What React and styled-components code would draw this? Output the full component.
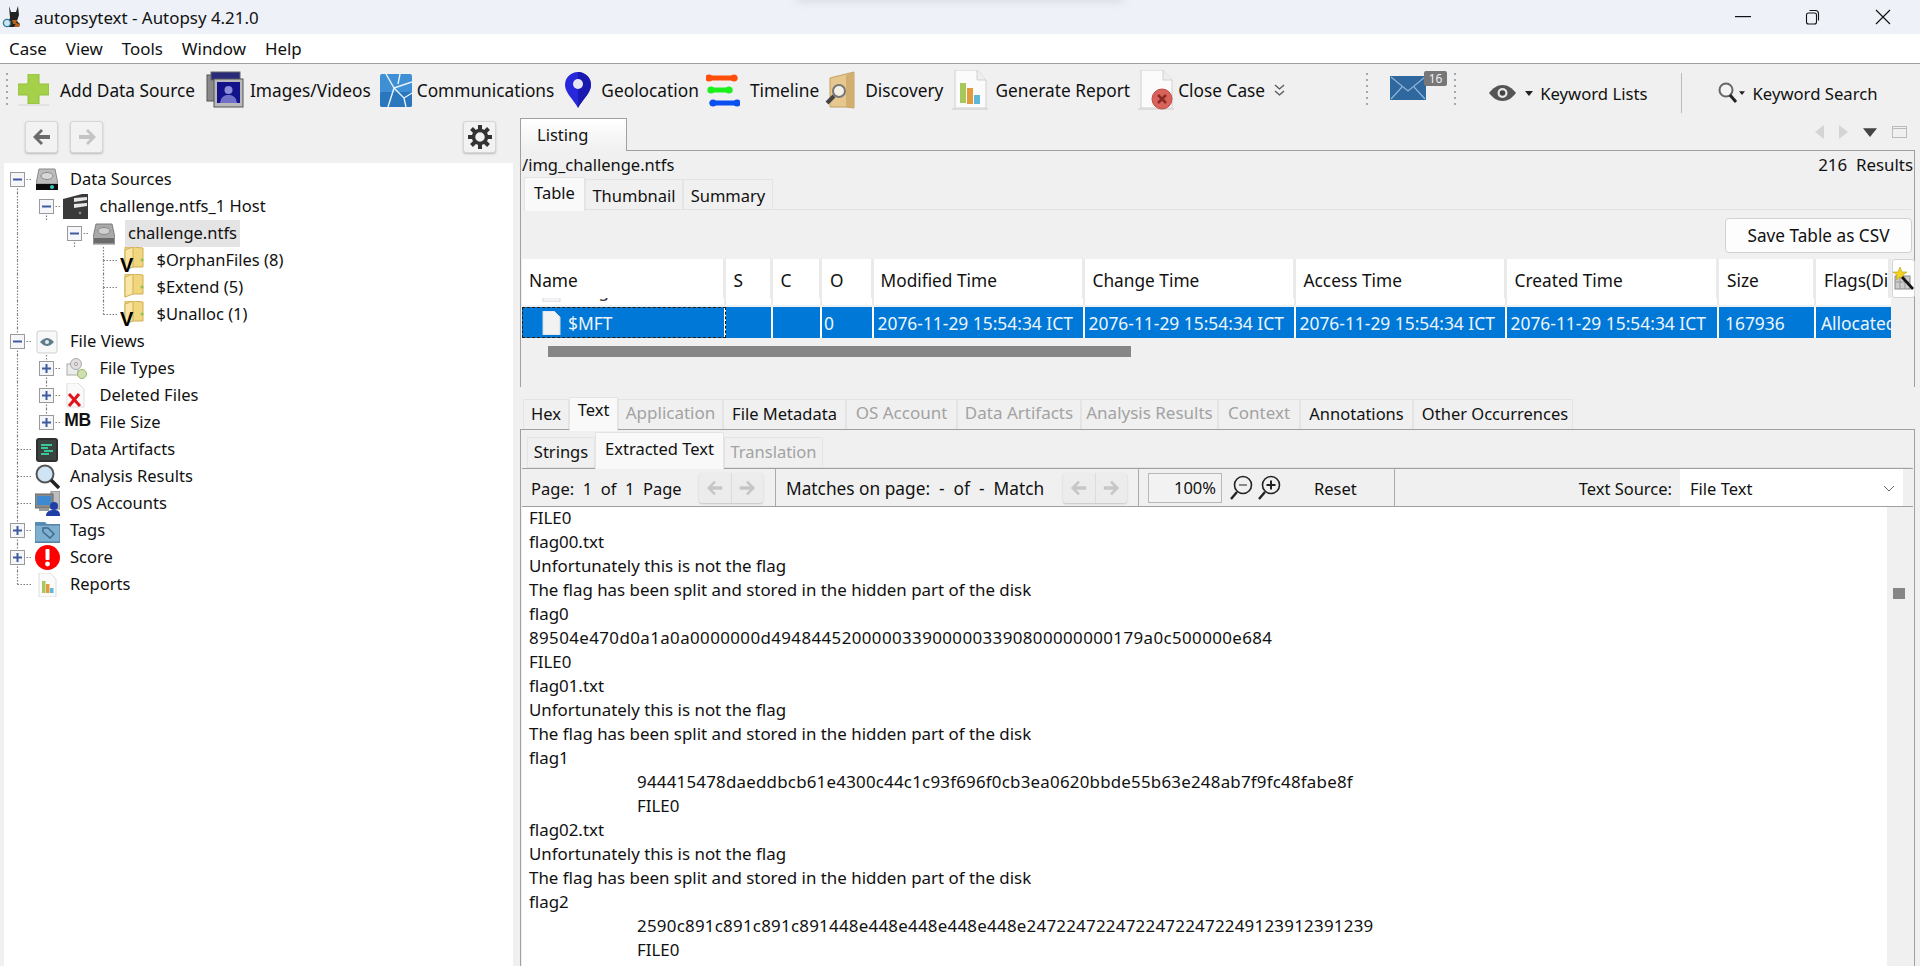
import React from 'react';
import styled, { createGlobalStyle } from 'styled-components';

const FONT = `"Noto Sans", "Open Sans", sans-serif`;
const PANEL = '#f0f0f0';
const LINE = '#a0a0a0';

const Global = createGlobalStyle`
  html, body { margin: 0; padding: 0; height: 100%; background: ${PANEL}; overflow: hidden; }
  body { font-family: ${FONT}; font-size: 16.5px; color: #111; }
  * { box-sizing: border-box; }
  svg { display: block; flex: none; }
`;

const Page = styled.div`
  width: 1920px;
  height: 966px;
  display: flex;
  flex-direction: column;
  overflow: hidden;
`;

/* title + menu */
const TitleBar = styled.div`
  position: relative;
  height: 34px;
  flex: none;
  background: #eef2f8;
  display: flex;
  align-items: center;
  padding: 0 2px 0 2px;
`;
const TitleShadow = styled.div`
  position: absolute;
  left: 795px;
  top: -8px;
  width: 330px;
  height: 10px;
  border-radius: 8px;
  background: #d8dce2;
  filter: blur(4px);
`;
const TitleText = styled.span`
  margin-left: 8px;
  font-size: 16.9px;
  flex: 1;
`;
const WinButton = styled.div`
  width: 70px;
  height: 34px;
  display: flex;
  align-items: center;
  justify-content: center;
`;
const MenuBar = styled.div`
  height: 30px;
  flex: none;
  background: #fff;
  border-bottom: 1px solid ${LINE};
  display: flex;
  align-items: center;
  padding-left: 9px;
  gap: 19px;
  font-size: 16.9px;
`;
const MenuItem = styled.span``;

/* main toolbar */
const ToolBar = styled.div`
  height: 54px;
  flex: none;
  display: flex;
  align-items: flex-start;
  padding: 9px 0 0 6px;
`;
const Grip = styled.div`
  width: 2px;
  height: 33px;
  margin-left: ${p => p.$ml || 0}px;
  flex: none;
  background-image: repeating-linear-gradient(to bottom, #a8a8a8 0 2px, transparent 2px 6px);
`;
const Tool = styled.div`
  height: 34px;
  display: flex;
  align-items: center;
  flex: none;
  margin-left: ${p => p.$ml}px;
  font-size: 17.3px;
  white-space: nowrap;
`;
const ToolLabel = styled.span`
  margin-left: ${p => p.$ml}px;
`;
const SideTool = styled(Tool)`
  height: 40px;
  font-size: 16.7px;
`;
const CaretGap = styled.span`
  margin-left: ${p => p.$ml}px;
  flex: none;
`;
const MailWrap = styled.div`
  position: relative;
  margin: 3px 0 0 ${p => p.$ml}px;
  width: 36px;
  height: 24px;
  flex: none;
`;
const Badge = styled.span`
  position: absolute;
  left: 34px;
  top: -5px;
  width: 23px;
  height: 15px;
  background: #777;
  color: #eee;
  font-size: 12px;
  line-height: 15px;
  text-align: center;
  border-radius: 2px;
`;
const VSep = styled.div`
  width: 1px;
  height: 40px;
  margin-left: ${p => p.$ml}px;
  background: #bbb;
  flex: none;
`;

/* layout */
const Main = styled.div`
  flex: 1;
  display: flex;
  min-height: 0;
`;
const LeftPane = styled.div`
  width: 520px;
  flex: none;
  display: flex;
  flex-direction: column;
  padding: 0 7px 0 4px;
`;
const NavRow = styled.div`
  height: 45px;
  flex: none;
  display: flex;
  align-items: flex-start;
  padding: 3px 0 0 21px;
`;
const NavBtn = styled.div`
  width: 33px;
  height: 32px;
  margin-left: ${p => p.$ml || 0}px;
  border-radius: 3px;
  border: 1px solid #d6d6d6;
  background: #f2f2f2;
  box-shadow: 0 1px 2px #bbb;
  display: flex;
  align-items: center;
  justify-content: center;
  flex: none;
`;
const Tree = styled.div`
  flex: 1;
  background: #fff;
  padding-top: 3px;
`;
const TreeRow = styled.div`
  height: 27px;
  display: flex;
  align-items: center;
  margin-left: -1px;
`;
const IconSlot = styled.div`
  width: 24px;
  height: 26px;
  margin-left: 3.5px;
  flex: none;
  display: flex;
  align-items: center;
  justify-content: center;
`;
const MbMark = styled.span`
  font-family: "Liberation Sans", sans-serif;
  font-weight: 700;
  font-size: 17.5px;
  letter-spacing: -0.3px;
  margin-top: -5px;
  margin-left: 4px;
  color: #111;
`;
const TreeLabel = styled.span`
  margin-left: ${p => (p.$top ? 8 : 9)}px;
  padding: 0 3px;
  height: 27px;
  line-height: 26px;
  white-space: nowrap;
  background: ${p => (p.$sel ? '#e4e4e4' : 'transparent')};
`;

const RightPane = styled.div`
  flex: 1;
  min-width: 0;
  display: flex;
  flex-direction: column;
  padding-right: 5px;
`;
const TopTabRow = styled.div`
  height: 32px;
  flex: none;
  display: flex;
  align-items: stretch;
  justify-content: space-between;
`;
const ListingTab = styled.div`
  width: 107px;
  border: 1px solid ${LINE};
  border-bottom: 0;
  background: linear-gradient(#fff, #f0f0f0);
  padding: 4px 0 0 16px;
  font-size: 16.5px;
  margin-bottom: -1px;
  position: relative;
`;
const PaneActions = styled.div`
  display: flex;
  align-items: center;
  padding: 0 8px 4px 0;
  gap: 15px;
`;
const UpperPanel = styled.div`
  height: 237px;
  flex: none;
  border: 1px solid ${LINE};
  border-bottom: 0;
  padding: 0 1px;
  display: flex;
  flex-direction: column;
`;
const PathRow = styled.div`
  height: 27px;
  flex: none;
  display: flex;
  justify-content: space-between;
  align-items: center;
  white-space: pre;
`;
const ResultCount = styled.span`
  font-size: 16.9px;
`;
const TabRow = styled.div`
  display: flex;
  align-items: flex-end;
  flex: none;
  height: ${p => p.$h}px;
  margin-left: ${p => p.$ml}px;
  margin-right: ${p => p.$mr || 0}px;
  border-bottom: 1px solid #e2e2e2;
`;
// $dy nudges the label up or down inside the fixed tab height
const Tab = styled.div`
  width: ${p => p.$w}px;
  height: ${p => (p.$active ? p.$h + 4 : p.$h)}px;
  margin-bottom: ${p => (p.$active ? -2 : 0)}px;
  flex: none;
  display: flex;
  align-items: ${p => (p.$active ? 'flex-start' : 'center')};
  justify-content: center;
  background: ${p => (p.$active ? '#f9f9f9' : PANEL)};
  color: ${p => (p.$off ? '#a2a2a2' : '#111')};
  border: 1px solid #e4e4e4;
  border-bottom: 0;
  white-space: nowrap;
  font-size: ${p => p.$fs || 16.5}px;
  line-height: ${p => (p.$active ? 28 + 2 * (p.$dy || 0) : 28)}px;
  ${p => (!p.$active && p.$dy > 0 ? `padding-top: ${p.$dy * 2}px;` : '')}
  ${p => (!p.$active && p.$dy < 0 ? `padding-bottom: ${-p.$dy * 2}px;` : '')}
  ${p => (p.$pl ? `padding-left: ${p.$pl}px;` : '')}
  position: relative;
`;
const SaveRow = styled.div`
  height: 49px;
  flex: none;
  display: flex;
  justify-content: flex-end;
  align-items: flex-start;
  padding: 8px 1px 0 0;
`;
const SaveBtn = styled.div`
  width: 187px;
  height: 35px;
  background: #fdfdfd;
  border: 1px solid #d0d0d0;
  border-radius: 4px;
  display: flex;
  align-items: center;
  justify-content: center;
  font-size: 17.2px;
`;
const HeadRow = styled.div`
  display: flex;
  flex: none;
  height: 39px;
  align-items: stretch;
`;
const HeadCell = styled.div`
  width: ${p => p.$w}px;
  flex: none;
  background: #fff;
  border-right: 3px solid #eaeaea;
  padding: 4px 0 0 ${p => p.$pl}px;
  display: flex;
  align-items: center;
  overflow: hidden;
  white-space: nowrap;
  font-size: 17.3px;
  &:last-of-type { border-right: 0; }
`;
const CornerBtn = styled.div`
  width: 23px;
  height: 39px;
  margin-left: 1px;
  background: #fff;
  border: 1px solid #d4d4d4;
  border-radius: 3px;
  display: flex;
  align-items: center;
  justify-content: center;
`;
const GhostRow = styled.div`
  display: flex;
  flex: none;
  height: 7px;
  overflow: hidden;
`;
const GhostCell = styled.div`
  width: ${p => p.$w}px;
  flex: none;
  background: #fff;
  border-right: 2px solid #eaeaea;
  overflow: hidden;
  position: relative;
  &:last-of-type { border-right: 0; }
`;
const GhostText = styled.div`
  margin: -23px 0 0 20px;
  display: flex;
  align-items: center;
  height: 30px;
  color: #333;
  font-size: 17.3px;
`;
const ResultRow = styled.div`
  display: flex;
  flex: none;
  height: 31px;
  margin-top: 2px;
`;
const ResultCell = styled.div`
  width: ${p => p.$w}px;
  flex: none;
  background: #0078d7;
  color: #eef5fc;
  border-right: 2px solid #fff;
  padding-left: ${p => p.$pl}px;
  display: flex;
  align-items: center;
  overflow: hidden;
  white-space: nowrap;
  font-size: 17.4px;
  ${p => (p.$focus ? 'outline: 1px dashed #2a1a08; outline-offset: -1px;' : '')}
  &:last-of-type { border-right: 0; }
`;
const FileName = styled.span`
  margin-left: ${p => p.$ml}px;
`;
const HBarTrack = styled.div`
  flex: none;
  height: 11px;
  margin: 8px 0 0 26px;
`;
const HBarThumb = styled.div`
  width: 583px;
  height: 11px;
  background: #868686;
`;

const LowerTabs = styled(TabRow)`
  margin-top: 5px;
  border-bottom: 0;
`;
const LowerPanel = styled.div`
  flex: 1;
  min-height: 0;
  border: 1px solid ${LINE};
  border-bottom: 0;
  padding: 0 1px;
  display: flex;
  flex-direction: column;
  overflow: hidden;
`;
const ViewerBar = styled.div`
  height: 39px;
  flex: none;
  display: flex;
  align-items: stretch;
  border-top: 1px solid ${LINE};
  border-bottom: 1px solid ${LINE};
`;
const BarText = styled.span`
  width: ${p => p.$w}px;
  margin-left: ${p => p.$ml || 0}px;
  padding-top: 1px;
  flex: none;
  align-self: center;
  white-space: pre;
  font-size: ${p => p.$fs || 16.5}px;
  text-align: ${p => p.$align || 'left'};
`;
const BarSep = styled.div`
  width: 1px;
  margin-left: ${p => p.$ml}px;
  background: #aaa;
  flex: none;
`;
const ArrowPair = styled.div`
  width: 64px;
  height: 30px;
  margin-left: ${p => p.$ml}px;
  align-self: center;
  flex: none;
  display: flex;
  border-radius: 3px;
  background: #ececec;
  box-shadow: 0 1px 2px #c4c4c4;
`;
const ArrowHalf = styled.div`
  flex: 1;
  display: flex;
  align-items: center;
  justify-content: center;
  border-right: ${p => (p.$first ? '1px solid #dcdcdc' : '0')};
`;
const ZoomField = styled.div`
  width: 74px;
  height: 30px;
  margin-left: ${p => p.$ml}px;
  align-self: center;
  flex: none;
  border: 1px solid #b8b8b8;
  background: #f2f2f2;
  display: flex;
  align-items: center;
  justify-content: flex-end;
  padding-right: 5px;
`;
const ZoomIcon = styled.div`
  margin-left: ${p => p.$ml}px;
  align-self: center;
  flex: none;
`;
const Combo = styled.div`
  width: 223px;
  margin-left: 8px;
  flex: none;
  background: #fff;
  display: flex;
  align-items: center;
  justify-content: space-between;
  padding: 1px 8px 0 10px;
`;
const TextArea = styled.div`
  flex: 1;
  min-height: 0;
  display: flex;
`;
const TextBody = styled.div`
  flex: 1;
  background: #fff;
  padding: 0 0 0 7px;
  overflow: hidden;
`;
const TextLine = styled.div`
  height: 24px;
  line-height: 21px;
  font-size: 16.9px;
  white-space: nowrap;
  padding-left: ${p => (p.$indent ? 108 : 0)}px;
  letter-spacing: ${p => p.$ls || 0}px;
`;
const ScrollStrip = styled.div`
  width: 26px;
  flex: none;
  padding: 81px 0 0 6px;
`;
const ScrollThumb = styled.div`
  width: 12px;
  height: 11px;
  background: #868686;
`;

/* ---- icons ---- */
const Logo = () => (
  <svg width="24" height="24" viewBox="0 0 24 24">
    <path d="M7 1l2 6h5l2-6 1 9-2 6 3 3-1 3H7l-1-5 2-4z" fill="#222" />
    <path d="M10 15h5l-1 4h-3z" fill="#b5641f" />
    <path d="M14 18l4 1-1 3h-5z" fill="#b5641f" />
    <circle cx="5" cy="18" r="3.6" fill="#cfe6ef" stroke="#2b7a99" strokeWidth="1.4" />
  </svg>
);
const Restore = () => (
  <svg width="16" height="16" viewBox="0 0 16 16" fill="none" stroke="#111" strokeWidth="1.1">
    <rect x="1.5" y="4" width="10" height="11" rx="2" />
    <path d="M4.5 1.5h6a3 3 0 0 1 3 3v7" />
  </svg>
);
const Plus = () => (
  <svg width="31" height="32" viewBox="0 0 31 32">
    <path d="M10 0h11v10h10v11H21v9H10v-9H0V10h10z" fill="#a4d04a" stroke="#93bf3f" />
    <rect x="0" y="30" width="31" height="2" fill="#e2e2e2" />
  </svg>
);
const Images = () => (
  <svg width="38" height="38" viewBox="0 0 38 38">
    <rect x="1" y="4" width="27" height="26" fill="#8a8a8a" stroke="#555" />
    <rect x="5" y="1" width="29" height="8" fill="#2a2a7a" stroke="#666" />
    <rect x="8" y="8" width="29" height="28" fill="#b9b9b9" stroke="#555" />
    <rect x="11" y="11" width="23" height="21" fill="#12128a" />
    <circle cx="22.5" cy="19" r="4" fill="#8c8cd8" />
    <path d="M14 32c1-7 5-8 8.500-8s7.500 1 8.500 8z" fill="#7070c8" />
  </svg>
);
const Comm = () => (
  <svg width="32" height="33" viewBox="0 0 32 33">
    <rect width="32" height="33" rx="2" fill="#3f8fd4" />
    <rect y="18" width="32" height="15" rx="2" fill="#2a76bd" />
    <path d="M6 0l8 14-6 19M14 14l18-6M14 14l10 10 2 9M24 24l8-5M20 0l-2 10" fill="none" stroke="#e8f3fb" strokeWidth="1.4" />
  </svg>
);
const Pin = () => (
  <svg width="26" height="36" viewBox="0 0 26 36">
    <path d="M13 0a13 13 0 0 1 13 13c0 8-9 15-13 23C9 28 0 21 0 13A13 13 0 0 1 13 0z" fill="#2727dc" />
    <path d="M13 0a13 13 0 0 1 13 13c0 8-9 15-13 23z" fill="#1a1ab0" />
    <circle cx="13" cy="12" r="5" fill="#e8e8f5" />
  </svg>
);
const Timeline = () => (
  <svg width="34" height="36" viewBox="0 0 34 36">
    <g strokeLinecap="round" strokeWidth="5">
      <path d="M2 6h27" stroke="#ff4f0a" />
      <path d="M4 18h20" stroke="#1cf01c" />
      <path d="M6 31h26" stroke="#0a50f0" />
    </g>
    <circle cx="3" cy="6" r="3.500" fill="#ff4f0a" />
    <circle cx="28" cy="6" r="3.500" fill="#ff4f0a" />
    <circle cx="5" cy="18" r="3.500" fill="#1cf01c" />
    <circle cx="23" cy="18" r="3.500" fill="#1cf01c" />
    <circle cx="7" cy="31" r="3.500" fill="#0a50f0" />
    <circle cx="31" cy="31" r="3.500" fill="#0a50f0" />
  </svg>
);
const Discovery = () => (
  <svg width="33" height="38" viewBox="0 0 33 38">
    <path d="M7 7l24-6v36l-8-1H7z" fill="#e6c88f" stroke="#c29f61" />
    <path d="M23 4l8-3v36l-8-1z" fill="#d2ae70" />
    <circle cx="16" cy="20" r="6" fill="#f3f0e8" stroke="#777" strokeWidth="2" />
    <path d="M11 25l-7 7" stroke="#444" strokeWidth="4" />
  </svg>
);
const DocBase = () => (
  <>
    <path d="M3 0h22l9 10v28H3z" fill="#fbfbfb" stroke="#d0d0d0" />
    <path d="M25 0v10h9" fill="#eee" stroke="#d0d0d0" />
    <rect x="0" y="38" width="36" height="2" fill="#dcdcdc" />
  </>
);
const Report = () => (
  <svg width="36" height="40" viewBox="0 0 36 40">
    <DocBase />
    <rect x="8" y="13" width="6" height="20" fill="#a6c85a" />
    <rect x="15" y="18" width="6" height="16" fill="#e39a3c" />
    <rect x="22" y="25" width="6" height="9" fill="#5fb6d8" />
  </svg>
);
const CloseDoc = () => (
  <svg width="36" height="40" viewBox="0 0 36 40">
    <DocBase />
    <circle cx="24" cy="29" r="10" fill="#d9625a" stroke="#c14a44" />
    <path d="M20 25l8 8M28 25l-8 8" stroke="#8a2a24" strokeWidth="2.500" />
  </svg>
);
const Chevrons = () => (
  <svg width="11" height="13" viewBox="0 0 11 13" fill="none" stroke="#555" strokeWidth="1.300">
    <path d="M1 1l4.500 4L10 1M1 7l4.500 4L10 7" />
  </svg>
);
const Mail = () => (
  <svg width="36" height="24" viewBox="0 0 36 24">
    <rect width="36" height="24" fill="#2f689f" />
    <path d="M1 1l17 14L35 1M1 23l11-12M35 23L24 11" fill="none" stroke="#8fb4d6" strokeWidth="1.200" />
  </svg>
);
const Eye = () => (
  <svg width="27" height="16" viewBox="0 0 27 16">
    <path d="M0 8c4-5 8-8 13.500-8S23 3 27 8c-4 5-8 8-13.500 8S4 13 0 8z" fill="#555" />
    <circle cx="13.500" cy="8" r="5" fill="#e8e8e8" />
    <circle cx="13.500" cy="8" r="2.800" fill="#444" />
  </svg>
);
const Caret = ({ c = '#222', w = 8, h = 5 }) => (
  <svg width={w} height={h} viewBox="0 0 8 5"><path d="M0 0h8L4 5z" fill={c} /></svg>
);
const SearchKw = () => (
  <svg width="20" height="24" viewBox="0 0 20 24" fill="none">
    <circle cx="8" cy="9" r="6.500" stroke="#666" strokeWidth="2" fill="#f4f4f4" />
    <path d="M12 14l6 7" stroke="#222" strokeWidth="3" />
  </svg>
);
const BackArrow = ({ dir = 1, c = '#6a6a6a', size = 20 }) => (
  <svg width={size} height={size} viewBox="0 0 20 20" style={dir < 0 ? { transform: 'scaleX(-1)' } : undefined}>
    <path d="M9 2l2 2-4 4h11v4H7l4 4-2 2-8-8z" fill={c} />
  </svg>
);
const Gear = () => (
  <svg width="24" height="24" viewBox="0 0 24 24">
    <circle cx="12" cy="12" r="6.500" fill="none" stroke="#333" strokeWidth="3.500" />
    <g stroke="#333" strokeWidth="4">
      <path d="M12 0v5M12 19v5M0 12h5M19 12h5M3.500 3.500l3.500 3.500M17 17l3.500 3.500M20.500 3.500L17 7M7 17l-3.500 3.500" />
    </g>
  </svg>
);
const Wand = () => (
  <svg width="21" height="24" viewBox="0 0 21 24">
    <rect x="2" y="9" width="15" height="13" fill="#ccc" stroke="#888" />
    <path d="M7 9v13M12 9v13M2 15h15" stroke="#999" />
    <path d="M7 0l2 5h5l-4 3 1 5-4-3-4 3 1-5-4-3h5z" fill="#f3d21f" stroke="#b99a10" strokeWidth=".6" />
    <path d="M9 10l11 12" stroke="#111" strokeWidth="2.600" />
  </svg>
);
const FileMini = ({ c = '#f2f2f2' }) => (
  <svg width="19" height="24" viewBox="0 0 19 24">
    <path d="M1 0h11l6 6v18H1z" fill={c} stroke="#d0dbe6" />
  </svg>
);
const ZoomGlass = ({ plus }) => (
  <svg width="24" height="26" viewBox="0 0 24 26" fill="none">
    <circle cx="14" cy="10" r="8.500" stroke="#222" strokeWidth="1.600" />
    <path d="M8 17l-6 7" stroke="#222" strokeWidth="2.400" />
    <path d={plus ? 'M9.500 10h9M14 5.500v9' : 'M10 10h8'} stroke={plus ? '#222' : '#888'} strokeWidth="2" />
  </svg>
);
const ChevronDown = () => (
  <svg width="12" height="7" viewBox="0 0 12 7" fill="none" stroke="#666"><path d="M1 1l5 5 5-5" /></svg>
);

/* tree icons */
const FOLDER_BODY = (
  <>
    <path d="M5 0h8l10 1v19H10l-5 3z" fill="#f2d67e" stroke="#cfae55" />
    <path d="M5 3l8-3v20l-8 3z" fill="#f9e6a4" stroke="#cfae55" />
    <circle cx="22" cy="13" r="1.500" fill="#8cc34a" />
  </>
);
const TI = {
  source: (
    <svg width="22" height="24" viewBox="0 0 22 24">
      <path d="M3 1h16l3 15H0z" fill="#bcbcbc" stroke="#888" />
      <ellipse cx="11" cy="8" rx="6" ry="3.500" fill="#d8d8d8" stroke="#8a8a8a" />
      <path d="M0 16h22v6H0z" fill="#0c0c0c" />
      <circle cx="16" cy="19" r="2" fill="#34c7c7" />
    </svg>
  ),
  host: (
    <svg width="25" height="25" viewBox="0 0 25 25">
      <path d="M0 5L19 0h6v25H0z" fill="#3a3a3a" />
      <path d="M11 4l13-1v3l-13 2zM11 10l13-1v3l-13 2z" fill="#e8e8e8" />
      <circle cx="17" cy="19" r="1.400" fill="#888" />
    </svg>
  ),
  hdd: (
    <svg width="22" height="22" viewBox="0 0 22 22">
      <path d="M3 1h16l3 14v6H0v-6z" fill="#a9a9a9" stroke="#7c7c7c" />
      <ellipse cx="11" cy="8" rx="6" ry="3.500" fill="#cfcfcf" stroke="#888" />
      <rect x="1" y="15" width="20" height="5" fill="#6a6a6a" />
    </svg>
  ),
  folder: (
    <svg width="26" height="28" viewBox="0 0 26 28">{FOLDER_BODY}</svg>
  ),
  vfolder: (
    <svg width="26" height="28" viewBox="0 0 26 28">
      {FOLDER_BODY}
      <text x="0" y="25" fontFamily="Liberation Sans" fontWeight="700" fontSize="20" fill="#000">V</text>
    </svg>
  ),
  eye: (
    <svg width="22" height="24" viewBox="0 0 22 24">
      <rect x="1" y="1" width="20" height="22" rx="2" fill="#f8f8f8" stroke="#cfcfcf" />
      <path d="M4 12c3-3 5-4 7-4s4 1 7 4c-3 3-5 4-7 4s-4-1-7-4z" fill="#5e7c8a" />
      <circle cx="11" cy="12" r="2" fill="#e6eef2" />
    </svg>
  ),
  types: (
    <svg width="23" height="23" viewBox="0 0 23 23">
      <rect x="3" y="7" width="11" height="11" fill="#ececec" stroke="#aaa" />
      <circle cx="12" cy="7" r="5.500" fill="#e4dede" stroke="#aaa" />
      <circle cx="12" cy="7" r="1.500" fill="#fff" stroke="#999" />
      <circle cx="18" cy="17" r="4.500" fill="#cfe0b0" stroke="#9ab36d" />
    </svg>
  ),
  deleted: (
    <svg width="19" height="25" viewBox="0 0 19 25">
      <path d="M1 0h11l6 6v18H1z" fill="#fafafa" stroke="#ddd" />
      <path d="M3 11l11 12M13 11L3 23" stroke="#e0141a" strokeWidth="3" />
    </svg>
  ),
  artifacts: (
    <svg width="22" height="24" viewBox="0 0 22 24">
      <rect width="22" height="24" rx="3" fill="#2f2f2f" />
      <rect x="2" y="2" width="18" height="20" fill="#3a4340" />
      <path d="M5 7h11M5 10h7M8 13h9M5 16h8" stroke="#3cc79a" strokeWidth="2" />
    </svg>
  ),
  search: (
    <svg width="25" height="25" viewBox="0 0 25 25" fill="none">
      <circle cx="10" cy="10" r="8.500" fill="#cfe4f5" stroke="#555" strokeWidth="2" />
      <path d="M16 16l8 8" stroke="#222" strokeWidth="3.500" />
    </svg>
  ),
  os: (
    <svg width="25" height="25" viewBox="0 0 25 25">
      <rect x="16" y="0" width="9" height="18" fill="#bdbdbd" stroke="#888" />
      <rect x="0" y="3" width="18" height="14" fill="#8a8a8a" stroke="#666" />
      <rect x="2" y="5" width="14" height="9" fill="#3e8ad0" />
      <rect x="4" y="17" width="10" height="3" fill="#999" />
      <circle cx="19" cy="15" r="4" fill="#1d3fa6" />
      <path d="M11 25c0-5 4-6 8-6s6 1 6 6z" fill="#1d3fa6" />
    </svg>
  ),
  tags: (
    <svg width="25" height="24" viewBox="0 0 25 24">
      <path d="M0 3h10l2 2h13v19H0z" fill="#5a8fb5" />
      <rect y="6" width="25" height="17" fill="#7fb0d0" stroke="#4c7ea3" />
      <path d="M8 9h5l6 6-4 4-7-6z" fill="none" stroke="#3b6a8c" strokeWidth="1.400" />
    </svg>
  ),
  score: (
    <svg width="25" height="25" viewBox="0 0 25 25">
      <circle cx="12.500" cy="12.500" r="12.500" fill="#f00" />
      <rect x="10.500" y="4" width="4" height="11" rx="1" fill="#fff" />
      <circle cx="12.500" cy="19" r="2.400" fill="#fff" />
    </svg>
  ),
  reports: (
    <svg width="19" height="24" viewBox="0 0 19 24">
      <path d="M1 0h11l6 6v18H1z" fill="#fafafa" stroke="#ddd" />
      <rect x="4" y="8" width="3.500" height="12" fill="#a6c85a" />
      <rect x="8" y="11" width="3.500" height="9" fill="#e39a3c" />
      <rect x="12" y="15" width="3.500" height="5" fill="#5fb6d8" />
    </svg>
  ),
};

// one column of the tree's dotted guides, with the expander box if the row has one
const Conn = ({ up, down, dash, exp }) => (
  <svg width="28.5" height="27" viewBox="0 0 28.5 27" style={{ flex: 'none' }}>
    <g stroke="#808080" strokeWidth="1.200" strokeDasharray="1.500 1.500" fill="none">
      {up && <path d="M14.500 0v13.500" />}
      {down && <path d="M14.500 13.500V27" />}
      {dash && <path d="M14.500 13.500H29" />}
    </g>
    {exp && (
      <>
        <rect x="7.500" y="6.500" width="14" height="14" fill="#f4f6f9" stroke="#9a9a9a" />
        <path d="M10 13.500h9" stroke="#3f5a9e" strokeWidth="2" />
        {exp === '+' && <path d="M14.500 9v9" stroke="#3f5a9e" strokeWidth="2" />}
      </>
    )}
  </svg>
);

// guides: one entry per ancestor column, true when that column keeps going
const TREE = [
  { g: [], exp: '-', up: false, down: true, icon: TI.source, label: 'Data Sources' },
  { g: [true], exp: '-', up: false, down: true, icon: TI.host, label: 'challenge.ntfs_1 Host' },
  { g: [true, false], exp: '-', up: false, down: true, icon: TI.hdd, label: 'challenge.ntfs', sel: true },
  { g: [true, false, false], up: true, down: true, icon: TI.vfolder, label: '$OrphanFiles (8)' },
  { g: [true, false, false], up: true, down: true, icon: TI.folder, label: '$Extend (5)' },
  { g: [true, false, false], up: true, down: false, icon: TI.vfolder, label: '$Unalloc (1)' },
  { g: [], exp: '-', up: true, down: true, icon: TI.eye, label: 'File Views' },
  { g: [true], exp: '+', up: true, down: true, icon: TI.types, label: 'File Types' },
  { g: [true], exp: '+', up: true, down: true, icon: TI.deleted, label: 'Deleted Files' },
  { g: [true], exp: '+', up: true, down: false, mb: true, label: 'File Size' },
  { g: [], up: true, down: true, icon: TI.artifacts, label: 'Data Artifacts' },
  { g: [], up: true, down: true, icon: TI.search, label: 'Analysis Results' },
  { g: [], up: true, down: true, icon: TI.os, label: 'OS Accounts' },
  { g: [], exp: '+', up: true, down: true, icon: TI.tags, label: 'Tags' },
  { g: [], exp: '+', up: true, down: true, icon: TI.score, label: 'Score' },
  { g: [], up: true, down: false, icon: TI.reports, label: 'Reports' },
];

const COLS = [
  { w: 203.5, name: 'Name', hp: 7, rp: 0 },
  { w: 47, name: 'S', hp: 8, rp: 0 },
  { w: 49.5, name: 'C', hp: 8, rp: 0 },
  { w: 51.5, name: 'O', hp: 8, rp: 2, val: '0' },
  { w: 211, name: 'Modified Time', hp: 7, rp: 4, val: '2076-11-29 15:54:34 ICT' },
  { w: 211, name: 'Change Time', hp: 8, rp: 4, val: '2076-11-29 15:54:34 ICT' },
  { w: 211, name: 'Access Time', hp: 8, rp: 4, val: '2076-11-29 15:54:34 ICT' },
  { w: 212.5, name: 'Created Time', hp: 8, rp: 4, val: '2076-11-29 15:54:34 ICT' },
  { w: 97, name: 'Size', hp: 8, rp: 6, val: '167936' },
  { w: 74.5, name: 'Flags(Dir)', hp: 8, rp: 5, val: 'Allocated' },
];

const NOT_FLAG = 'Unfortunately this is not the flag';
const SPLIT = 'The flag has been split and stored in the hidden part of the disk';
// [text, indented, letter-spacing for the long hex runs]
const LINES = [
  ['FILE0'], ['flag00.txt'], [NOT_FLAG], [SPLIT], ['flag0'],
  ['89504e470d0a1a0a0000000d4948445200000339000003390800000000179a0c500000e684', false, 0.4],
  ['FILE0'], ['flag01.txt'], [NOT_FLAG], [SPLIT], ['flag1'],
  ['944415478daeddbcb61e4300c44c1c93f696f0cb3ea0620bbde55b63e248ab7f9fc48fabe8f', true, 0.22],
  ['FILE0', true], ['flag02.txt'], [NOT_FLAG], [SPLIT], ['flag2'],
  ['2590c891c891c891c891448e448e448e448e448e24722472247224722472249123912391239', true, 0.25],
  ['FILE0', true],
];

const LOWER_TABS = [
  ['Hex', 46], ['Text', 49, 'on'], ['Application', 105, 'off'], ['File Metadata', 123], ['OS Account', 111, 'off'],
  ['Data Artifacts', 124, 'off'], ['Analysis Results', 137, 'off'], ['Context', 82, 'off'], ['Annotations', 113], ['Other Occurrences', 160, null, 4],
];

const ArrowButtons = ({ ml }) => (
  <ArrowPair $ml={ml}>
    <ArrowHalf $first><BackArrow c="#c6c6c6" size={18} /></ArrowHalf>
    <ArrowHalf><BackArrow dir={-1} c="#c6c6c6" size={18} /></ArrowHalf>
  </ArrowPair>
);

export default function App() {
  return (
    <Page>
      <Global />
      <TitleBar>
        <TitleShadow />
        <Logo />
        <TitleText>autopsytext - Autopsy 4.21.0</TitleText>
        <WinButton>
          <svg width="16" height="2" viewBox="0 0 16 2"><rect width="16" height="1.200" fill="#111" /></svg>
        </WinButton>
        <WinButton><Restore /></WinButton>
        <WinButton>
          <svg width="16" height="16" viewBox="0 0 16 16" stroke="#111" strokeWidth="1.200"><path d="M1 1l14 14M15 1L1 15" /></svg>
        </WinButton>
      </TitleBar>
      <MenuBar>
        <MenuItem>Case</MenuItem>
        <MenuItem>View</MenuItem>
        <MenuItem>Tools</MenuItem>
        <MenuItem>Window</MenuItem>
        <MenuItem>Help</MenuItem>
      </MenuBar>
      <ToolBar>
        <Grip />
        <Tool $ml={10}><Plus /><ToolLabel $ml={11}>Add Data Source</ToolLabel></Tool>
        <Tool $ml={11}><Images /><ToolLabel $ml={6}>Images/Videos</ToolLabel></Tool>
        <Tool $ml={9}><Comm /><ToolLabel $ml={5}>Communications</ToolLabel></Tool>
        <Tool $ml={11}><Pin /><ToolLabel $ml={10}>Geolocation</ToolLabel></Tool>
        <Tool $ml={7}><Timeline /><ToolLabel $ml={10}>Timeline</ToolLabel></Tool>
        <Tool $ml={4}><Discovery /><ToolLabel $ml={9}>Discovery</ToolLabel></Tool>
        <Tool $ml={9}><Report /><ToolLabel $ml={7}>Generate Report</ToolLabel></Tool>
        <Tool $ml={8}><CloseDoc /><ToolLabel $ml={4}>Close Case</ToolLabel></Tool>
        <Tool $ml={9}><Chevrons /></Tool>
        <Grip $ml={81} />
        <MailWrap $ml={22}><Mail /><Badge>16</Badge></MailWrap>
        <Grip $ml={28} />
        <SideTool $ml={33}>
          <Eye />
          <CaretGap $ml={9}><Caret /></CaretGap>
          <ToolLabel $ml={7}>Keyword Lists</ToolLabel>
        </SideTool>
        <VSep $ml={34} />
        <SideTool $ml={36}>
          <SearchKw />
          <CaretGap $ml={1}><Caret w={6} h={4} /></CaretGap>
          <ToolLabel $ml={7}>Keyword Search</ToolLabel>
        </SideTool>
      </ToolBar>
      <Main>
        <LeftPane>
          <NavRow>
            <NavBtn><BackArrow /></NavBtn>
            <NavBtn $ml={12}><BackArrow dir={-1} c="#c4c4c4" /></NavBtn>
            <NavBtn $ml={360}><Gear /></NavBtn>
          </NavRow>
          <Tree>
            {TREE.map(r => (
              <TreeRow key={r.label}>
                {r.g.map((on, i) => <Conn key={i} up={on} down={on} />)}
                <Conn up={r.up} down={r.down} dash exp={r.exp} />
                <IconSlot>{r.mb ? <MbMark>MB</MbMark> : r.icon}</IconSlot>
                <TreeLabel $sel={r.sel} $top={r.g.length === 0}>{r.label}</TreeLabel>
              </TreeRow>
            ))}
          </Tree>
        </LeftPane>
        <RightPane>
          <TopTabRow>
            <ListingTab>Listing</ListingTab>
            <PaneActions>
              <svg width="9" height="14" viewBox="0 0 9 14"><path d="M9 0v14L0 7z" fill="#d4d4d4" /></svg>
              <svg width="9" height="14" viewBox="0 0 9 14"><path d="M0 0v14l9-7z" fill="#d4d4d4" /></svg>
              <Caret c="#444" w={14} h={9} />
              <svg width="15" height="12" viewBox="0 0 15 12" fill="none" stroke="#bbb"><rect x=".5" y=".5" width="14" height="11" /><path d="M0 2.500h15" /></svg>
            </PaneActions>
          </TopTabRow>
          <UpperPanel>
            <PathRow>
              <span>/img_challenge.ntfs</span>
              <ResultCount>216  Results</ResultCount>
            </PathRow>
            <TabRow $h={32} $ml={2} $mr={2}>
              <Tab $w={61} $h={30} $active $dy={1}>Table</Tab>
              <Tab $w={98} $h={30} $dy={1.5}>Thumbnail</Tab>
              <Tab $w={90} $h={30} $dy={1.5}>Summary</Tab>
            </TabRow>
            <SaveRow><SaveBtn>Save Table as CSV</SaveBtn></SaveRow>
            <HeadRow>
              {COLS.map(c => <HeadCell key={c.name} $w={c.w} $pl={c.hp}>{c.name}</HeadCell>)}
              <CornerBtn><Wand /></CornerBtn>
            </HeadRow>
            <GhostRow>
              {COLS.map((c, i) => (
                <GhostCell key={c.name} $w={c.w}>
                  {i === 0 && <GhostText><FileMini /><FileName $ml={8}>$LogFile</FileName></GhostText>}
                </GhostCell>
              ))}
            </GhostRow>
            <ResultRow>
              <ResultCell $w={COLS[0].w} $focus $pl={20}>
                <FileMini />
                <FileName $ml={7}>$MFT</FileName>
              </ResultCell>
              {COLS.slice(1).map(c => <ResultCell key={c.name} $w={c.w} $pl={c.rp}>{c.val}</ResultCell>)}
            </ResultRow>
            <HBarTrack><HBarThumb /></HBarTrack>
          </UpperPanel>
          <LowerTabs $h={37} $ml={3}>
            {LOWER_TABS.map(([t, w, k, pl]) => (
              <Tab
                key={t}
                $w={w}
                $h={30}
                $pl={pl}
                $active={k === 'on'}
                $off={k === 'off'}
                $fs={k === 'off' ? 17 : 16.5}
                $dy={k === 'on' ? -2 : k === 'off' ? -2 : -1}
              >
                {t}
              </Tab>
            ))}
          </LowerTabs>
          <LowerPanel>
            <TabRow $h={38} $ml={5} $mr={2}>
              <Tab $w={68} $h={30} $dy={-1}>Strings</Tab>
              <Tab $w={129} $h={33} $active $dy={2}>Extracted Text</Tab>
              <Tab $w={99} $h={30} $off $dy={-1}>Translation</Tab>
            </TabRow>
            <ViewerBar>
              <BarText $w={243} $ml={9}>{'Page:  1  of  1  Page'}</BarText>
              <ArrowButtons ml={-75} />
              <BarSep $ml={12} />
              <BarText $w={268} $ml={10} $fs={17.3}>{'Matches on page:  -  of  -  Match'}</BarText>
              <ArrowButtons ml={9} />
              <BarSep $ml={11} />
              <ZoomField $ml={9}>100%</ZoomField>
              <ZoomIcon $ml={7}><ZoomGlass /></ZoomIcon>
              <ZoomIcon $ml={4}><ZoomGlass plus /></ZoomIcon>
              <BarText $w={60} $ml={33}>Reset</BarText>
              <BarSep $ml={20} />
              <BarText $w={277} $align="right">Text Source:</BarText>
              <Combo>File Text<ChevronDown /></Combo>
            </ViewerBar>
            <TextArea>
              <TextBody>
                {LINES.map(([t, indent, ls], i) => <TextLine key={i} $indent={indent} $ls={ls}>{t}</TextLine>)}
              </TextBody>
              <ScrollStrip><ScrollThumb /></ScrollStrip>
            </TextArea>
          </LowerPanel>
        </RightPane>
      </Main>
    </Page>
  );
}
